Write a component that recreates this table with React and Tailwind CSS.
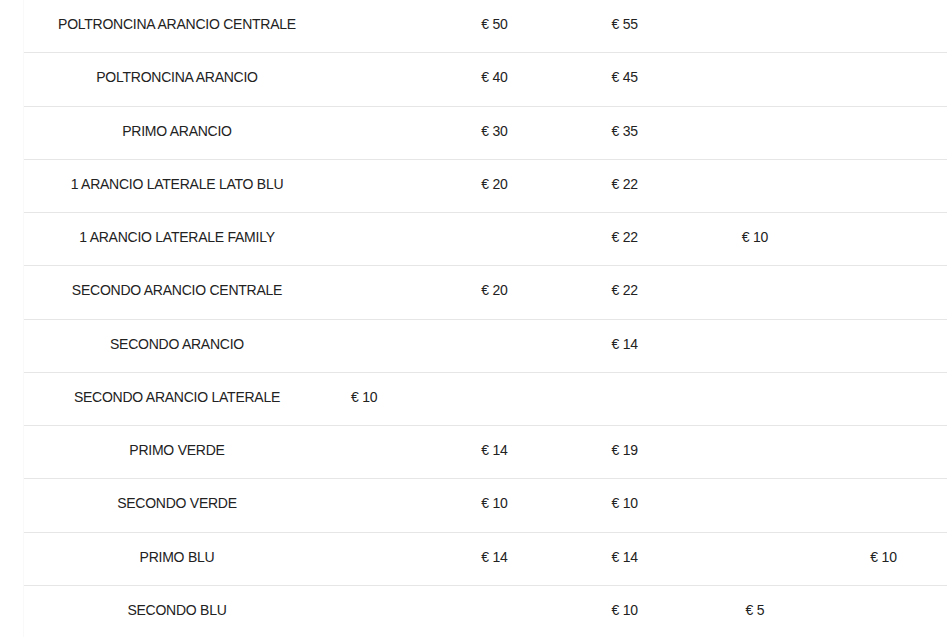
const rows = [
  ["POLTRONCINA ARANCIO CENTRALE", "", "€ 50", "€ 55", "", ""],
  ["POLTRONCINA ARANCIO", "", "€ 40", "€ 45", "", ""],
  ["PRIMO ARANCIO", "", "€ 30", "€ 35", "", ""],
  ["1 ARANCIO LATERALE LATO BLU", "", "€ 20", "€ 22", "", ""],
  ["1 ARANCIO LATERALE FAMILY", "", "", "€ 22", "€ 10", ""],
  ["SECONDO ARANCIO CENTRALE", "", "€ 20", "€ 22", "", ""],
  ["SECONDO ARANCIO", "", "", "€ 14", "", ""],
  ["SECONDO ARANCIO LATERALE", "€ 10", "", "", "", ""],
  ["PRIMO VERDE", "", "€ 14", "€ 19", "", ""],
  ["SECONDO VERDE", "", "€ 10", "€ 10", "", ""],
  ["PRIMO BLU", "", "€ 14", "€ 14", "", "€ 10"],
  ["SECONDO BLU", "", "", "€ 10", "€ 5", ""],
];

export default function App() {
  return (
    <div className="h-[637px] overflow-hidden bg-white font-['Liberation_Sans',Arial,sans-serif] text-[14px] text-[#222]">
      <div className="ml-[23px] w-[924px] border-l border-[#f9f9f9]">
        {rows.map((row, i) => (
          <div
            key={i}
            className="grid h-[53.25px] grid-cols-[275px_130.25px_130.25px_130.25px_130.25px_1fr] border-b border-[#e6e6e6] pt-[14px] leading-[20px]"
          >
            <div className="whitespace-nowrap pl-[31px] text-center tracking-[-0.25px]">{row[0]}</div>
            {row.slice(1).map((v, j) => (
              <div key={j} className="whitespace-nowrap text-center tracking-[-0.2px]">
                {v}
              </div>
            ))}
          </div>
        ))}
      </div>
    </div>
  );
}
